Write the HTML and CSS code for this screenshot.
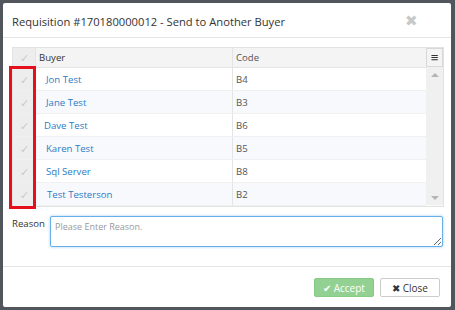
FILE: index.html
```html
<!DOCTYPE html>
<html lang="en">

<head>
    <meta charset="UTF-8">
    <title>Send to Another Buyer</title>
    <link rel="stylesheet" href="styles.css">
</head>

<body>
    <div class="modal">
        <div class="modal-header">
            <span class="modal-title">Requisition #170180000012 - Send to Another Buyer</span>
            <span class="close-x">&#10006;</span>
        </div>

        <div class="modal-body">
            <div class="grid">
                <div class="grid-main">
                    <div class="grid-row grid-head">
                        <div class="cell check">&#10003;</div>
                        <div class="cell buyer">Buyer</div>
                        <div class="cell code">Code</div>
                    </div>
                    <div class="grid-row">
                        <div class="cell check">&#10003;</div>
                        <div class="cell buyer"><a>Jon Test</a></div>
                        <div class="cell code">B4</div>
                    </div>
                    <div class="grid-row alt">
                        <div class="cell check">&#10003;</div>
                        <div class="cell buyer"><a>Jane Test</a></div>
                        <div class="cell code">B3</div>
                    </div>
                    <div class="grid-row">
                        <div class="cell check">&#10003;</div>
                        <div class="cell buyer"><a class="shift-left">Dave Test</a></div>
                        <div class="cell code">B6</div>
                    </div>
                    <div class="grid-row alt">
                        <div class="cell check">&#10003;</div>
                        <div class="cell buyer"><a>Karen Test</a></div>
                        <div class="cell code">B5</div>
                    </div>
                    <div class="grid-row">
                        <div class="cell check">&#10003;</div>
                        <div class="cell buyer"><a>Sql Server</a></div>
                        <div class="cell code">B8</div>
                    </div>
                    <div class="grid-row alt">
                        <div class="cell check">&#10003;</div>
                        <div class="cell buyer"><a class="shift-right">Test Testerson</a></div>
                        <div class="cell code">B2</div>
                    </div>
                </div>
                <div class="grid-side">
                    <div class="menu-btn">&#8801;</div>
                    <div class="scrollbar">
                        <span class="arrow-up"></span>
                        <span class="arrow-down"></span>
                    </div>
                </div>
                <!-- annotation box round the check column -->
                <div class="highlight"></div>
            </div>

            <div class="reason">
                <label for="reason">Reason</label>
                <textarea id="reason" placeholder="Please Enter Reason."></textarea>
            </div>
        </div>

        <div class="modal-footer">
            <button class="btn btn-accept">&#10004; Accept</button>
            <button class="btn btn-close">&#10006; Close</button>
        </div>
    </div>
</body>

</html>
```

FILE: styles.css
```css
body {
    margin: 0;
    background-color: #51565d;
    font-family: "Open Sans", Arial, sans-serif;
    height: 310px;
    overflow: hidden;
}

.modal {
    width: 448px;
    height: 304px;
    margin: 3px 0 0 3px;
    background-color: #fff;
    border-radius: 2px;
    display: flex;
    flex-direction: column;
}

.modal-header {
    height: 34px;
    padding: 0 12px 0 9px;
    display: flex;
    align-items: center;
    justify-content: space-between;
    border-bottom: 1px solid #e5e5e5;
}

.modal-title {
    font-size: 11.2px;
    color: #333;
    padding-top: 2px;
}

.close-x {
    font-size: 15px;
    color: #c8c8c8;
    margin-right: 21px;
}

.modal-body {
    padding: 9px 7px 0 9px;
    flex: 1;
}

.grid {
    position: relative;
    display: flex;
    height: 158px;
    border: 1px solid #e2e2e2;
    background-color: #fafafa;
}

.grid-main {
    flex: 1;
}

.grid-row {
    display: flex;
    height: 23px;
    border-bottom: 1px solid #f0f0f0;
    box-sizing: border-box;
    background-color: #fff;
}

.grid-row.alt {
    background-color: #f7f9fc;
}

.grid-head {
    height: 20px;
    background-color: #f4f4f4;
    border-bottom: 1px solid #e4e4e4;
}

.cell {
    display: flex;
    align-items: center;
    font-size: 9.6px;
    color: #333;
}

.check {
    width: 22px;
    justify-content: center;
    background-color: #ededed;
    color: #cacaca;
    font-size: 11px;
    border-right: 1px solid #e4e4e4;
}

.buyer {
    width: 193px;
    padding-left: 3px;
    border-right: 1px solid #e4e4e4;
}

.grid-row .buyer a {
    color: #2a7cc7;
    padding-left: 7px;
}

.grid-head .buyer {
    color: #333;
}

.buyer a.shift-left {
    padding-left: 5px;
}

.buyer a.shift-right {
    padding-left: 8px;
}

.code {
    padding-left: 3px;
    color: #555;
}

.grid-side {
    width: 17px;
    display: flex;
    flex-direction: column;
}

.menu-btn {
    height: 19px;
    border: 1px solid #d8d8d8;
    background-color: #f4f4f4;
    box-sizing: border-box;
    text-align: center;
    font-size: 13px;
    line-height: 17px;
    color: #333;
}

.scrollbar {
    height: 138px;
    background-color: #f0f0f0;
    display: flex;
    flex-direction: column;
    justify-content: space-between;
    align-items: center;
    padding: 6px 0 5px;
    box-sizing: border-box;
}

.arrow-up,
.arrow-down {
    width: 0;
    height: 0;
    border-left: 4px solid transparent;
    border-right: 4px solid transparent;
}

.arrow-up {
    border-bottom: 4px solid #b5b5b5;
}

.arrow-down {
    border-top: 4px solid #b5b5b5;
}

.highlight {
    position: absolute;
    left: -4px;
    top: 18px;
    width: 21px;
    height: 137px;
    border: 3px solid #e4101c;
}

.reason {
    display: flex;
    margin-top: 9px;
}

.reason label {
    width: 38px;
    font-size: 9.6px;
    color: #333;
    padding-top: 1px;
}

.reason textarea {
    width: 393px;
    height: 31px;
    box-sizing: border-box;
    border: 1px solid #66afe9;
    border-radius: 2px;
    box-shadow: 0 0 3px rgba(102, 175, 233, 0.6);
    font-family: "Open Sans", Arial, sans-serif;
    font-size: 9px;
    padding: 3px 4px;
    outline: none;
}

.reason textarea::placeholder {
    color: #999;
}

.modal-footer {
    height: 41px;
    border-top: 1px solid #e5e5e5;
    display: flex;
    justify-content: flex-end;
    align-items: flex-start;
    padding: 11px 11px 0 0;
    box-sizing: border-box;
    gap: 6px;
}

.btn {
    width: 60px;
    height: 19px;
    font-family: "Open Sans", Arial, sans-serif;
    font-size: 10px;
    border-radius: 2px;
    padding: 0;
}

.btn-accept {
    background-color: #92d192;
    border: 1px solid #86ca86;
    color: #fff;
}

.btn-close {
    background-color: #fff;
    border: 1px solid #ccc;
    color: #333;
}
```
